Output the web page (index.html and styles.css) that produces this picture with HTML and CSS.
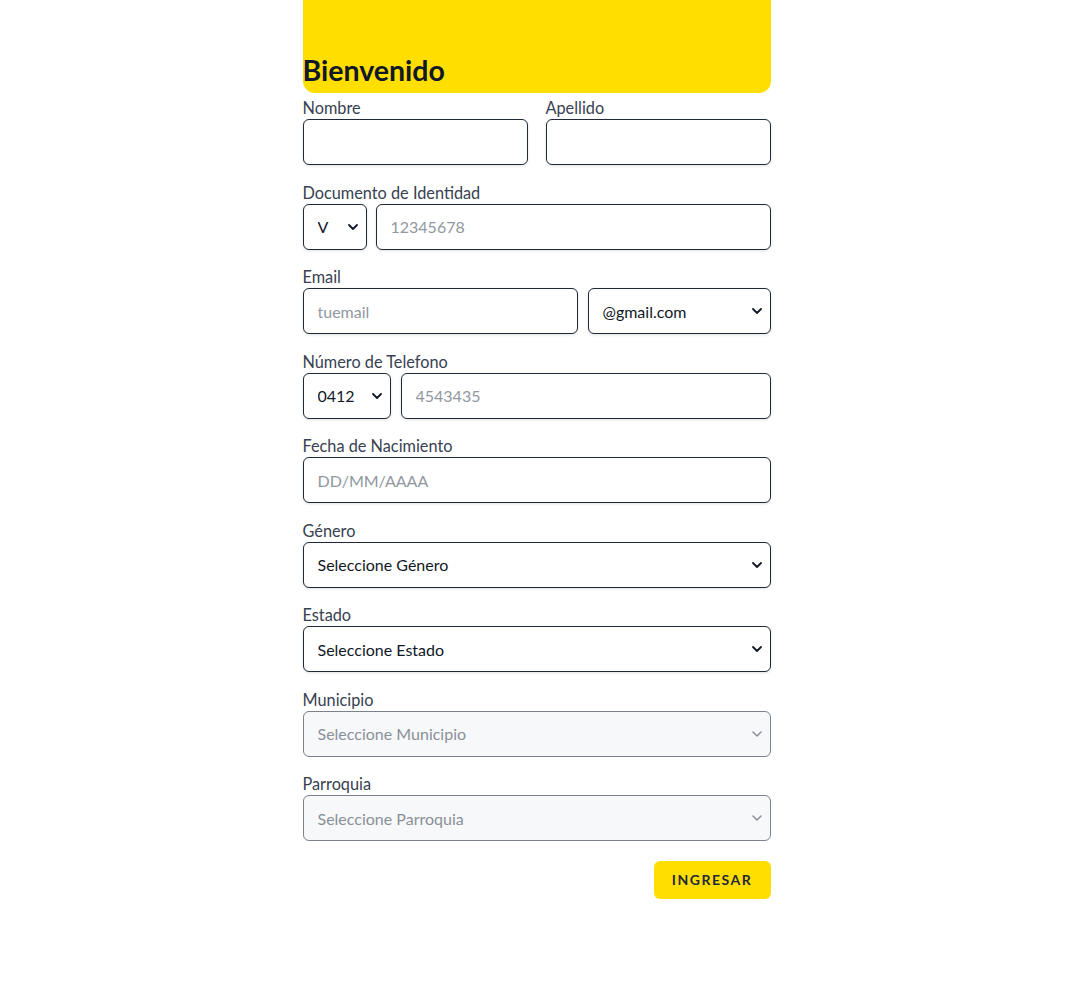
FILE: index.html
```html
<!DOCTYPE html>
<html lang="es">
<head>
<meta charset="utf-8">
<title>Bienvenido</title>
<link rel="stylesheet" href="styles.css">
</head>
<body>
<main class="page">
  <header class="hero">
    <h1 class="hero-title">Bienvenido</h1>
  </header>
  <form class="form">
    <div class="row cols-2">
      <div class="field">
        <label class="label">Nombre</label>
        <input class="control" type="text">
      </div>
      <div class="field">
        <label class="label">Apellido</label>
        <input class="control" type="text">
      </div>
    </div>

    <div class="field">
      <label class="label">Documento de Identidad</label>
      <div class="row doc">
        <div class="sel">
          <select class="control select"><option>V</option></select>
          <svg class="chev" viewBox="0 0 10 6" width="10" height="6"><path d="M1 1l4 4 4-4" fill="none" stroke="currentColor" stroke-width="1.8" stroke-linecap="round" stroke-linejoin="round"/></svg>
        </div>
        <input class="control" type="text" placeholder="12345678">
      </div>
    </div>

    <div class="field">
      <label class="label">Email</label>
      <div class="row email">
        <input class="control" type="text" placeholder="tuemail">
        <div class="sel">
          <select class="control select"><option>@gmail.com</option></select>
          <svg class="chev" viewBox="0 0 10 6" width="10" height="6"><path d="M1 1l4 4 4-4" fill="none" stroke="currentColor" stroke-width="1.8" stroke-linecap="round" stroke-linejoin="round"/></svg>
        </div>
      </div>
    </div>

    <div class="field">
      <label class="label">Número de Telefono</label>
      <div class="row phone">
        <div class="sel">
          <select class="control select"><option>0412</option></select>
          <svg class="chev" viewBox="0 0 10 6" width="10" height="6"><path d="M1 1l4 4 4-4" fill="none" stroke="currentColor" stroke-width="1.8" stroke-linecap="round" stroke-linejoin="round"/></svg>
        </div>
        <input class="control" type="text" placeholder="4543435">
      </div>
    </div>

    <div class="field">
      <label class="label">Fecha de Nacimiento</label>
      <input class="control" type="text" placeholder="DD/MM/AAAA">
    </div>

    <div class="field">
      <label class="label">Género</label>
      <div class="sel">
        <select class="control select"><option>Seleccione Género</option></select>
        <svg class="chev" viewBox="0 0 10 6" width="10" height="6"><path d="M1 1l4 4 4-4" fill="none" stroke="currentColor" stroke-width="1.8" stroke-linecap="round" stroke-linejoin="round"/></svg>
      </div>
    </div>

    <div class="field">
      <label class="label">Estado</label>
      <div class="sel">
        <select class="control select"><option>Seleccione Estado</option></select>
        <svg class="chev" viewBox="0 0 10 6" width="10" height="6"><path d="M1 1l4 4 4-4" fill="none" stroke="currentColor" stroke-width="1.8" stroke-linecap="round" stroke-linejoin="round"/></svg>
      </div>
    </div>

    <div class="field">
      <label class="label">Municipio</label>
      <div class="sel disabled">
        <select class="control select" disabled><option>Seleccione Municipio</option></select>
        <svg class="chev" viewBox="0 0 10 6" width="10" height="6"><path d="M1 1l4 4 4-4" fill="none" stroke="currentColor" stroke-width="1.5" stroke-linecap="round" stroke-linejoin="round"/></svg>
      </div>
    </div>

    <div class="field">
      <label class="label">Parroquia</label>
      <div class="sel disabled">
        <select class="control select" disabled><option>Seleccione Parroquia</option></select>
        <svg class="chev" viewBox="0 0 10 6" width="10" height="6"><path d="M1 1l4 4 4-4" fill="none" stroke="currentColor" stroke-width="1.5" stroke-linecap="round" stroke-linejoin="round"/></svg>
      </div>
    </div>

    <div class="actions">
      <button class="btn" type="button">Ingresar</button>
    </div>
  </form>
</main>
</body>
</html>
```

FILE: styles.css
```css
* { box-sizing: border-box; }

html, body {
  margin: 0;
  padding: 0;
  background: #ffffff;
}

body {
  font-family: Lato, "Open Sans", "Liberation Sans", sans-serif;
  color: #111827;
}

.page {
  width: 468px;
  margin: 0 auto;
}

.hero {
  height: 93px;
  background: #ffde00;
  border-radius: 0 0 12px 12px;
  display: flex;
  align-items: flex-end;
}

.hero-title {
  margin: 0;
  font-size: 28.5px;
  font-weight: 700;
  line-height: 32px;
  padding-bottom: 7px;
  color: #111827;
}

.form {
  padding-top: 7px;
  display: flex;
  flex-direction: column;
  gap: 19.5px;
}

.field {
  display: flex;
  flex-direction: column;
  min-width: 0;
}

.label {
  font-size: 16.3px;
  line-height: 16px;
  padding-bottom: 3px;
  color: #374151;
}

.row {
  display: grid;
}

.cols-2 {
  grid-template-columns: 1fr 1fr;
  column-gap: 18px;
}

.doc {
  grid-template-columns: 64px 1fr;
  column-gap: 9px;
}

.email {
  grid-template-columns: 275px 1fr;
  column-gap: 10px;
}

.phone {
  grid-template-columns: 88px 1fr;
  column-gap: 10px;
}

.control {
  display: block;
  width: 100%;
  height: 46px;
  margin: 0;
  padding: 0 14px;
  border: 1px solid #1f2937;
  border-radius: 6px;
  background: #ffffff;
  font-family: inherit;
  font-size: 16px;
  color: #111827;
  box-shadow: 0 1px 3px rgba(0, 0, 0, 0.12);
  outline: none;
}

.control::placeholder {
  color: #9197a0;
}

.sel {
  position: relative;
}

.select {
  appearance: none;
  -webkit-appearance: none;
  padding-right: 28px;
}

.chev {
  position: absolute;
  right: 9px;
  top: 20px;
  color: #111827;
  pointer-events: none;
}

.sel.disabled .select {
  background: #f7f8fa;
  border-color: #7c828c;
  color: #8a9099;
  box-shadow: none;
  opacity: 1;
}

.sel.disabled .chev {
  color: #8a9099;
}

.actions {
  display: flex;
  justify-content: flex-end;
}

.btn {
  height: 38px;
  width: 117px;
  border: none;
  border-radius: 6px;
  background: #ffde00;
  color: #1f2937;
  font-family: inherit;
  font-size: 14px;
  font-weight: 700;
  letter-spacing: 1.5px;
  text-transform: uppercase;
  cursor: pointer;
}
```
